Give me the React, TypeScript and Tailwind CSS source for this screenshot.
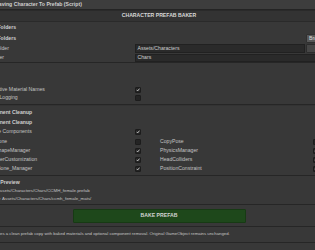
const labelFont = "font-['Liberation_Sans',Arial,sans-serif]";

function Check({ on }: { on?: boolean }) {
  return (
    <span className="w-[6px] h-[6px] rounded-[1px] bg-[#242424] border border-[#1c1c1c] flex items-center justify-center box-border">
      {on && (
        <svg viewBox="0 0 6 6" className="w-[6px] h-[6px]">
          <path d="M1.2 3.1 L2.5 4.4 L4.9 1.4" stroke="#f0f0f0" strokeWidth="1.1" fill="none" strokeLinecap="round" />
        </svg>
      )}
    </span>
  );
}

function Line() {
  return <div className="h-[1px] bg-[#262626] shrink-0" />;
}

function Header({ text, h = "h-[11px]" }: { text: string; h?: string }) {
  return (
    <div className={`${h} flex items-center font-bold text-[#cfcfcf]`}>{text}</div>
  );
}

function ToggleRow({ label, on, h = "h-[8px]" }: { label: string; on?: boolean; h?: string }) {
  return (
    <div className={`${h} flex items-center`}>
      <span className="w-[153px] shrink-0 whitespace-nowrap">{label}</span>
      <Check on={on} />
    </div>
  );
}

const cleanup = [
  ["SpineBone", false, "CopyPose", false, "h-[8px]"],
  ["BlendShapeManager", true, "PhysicsManager", true, "h-[9px]"],
  ["CharacterCustomization", true, "HeadColliders", true, "h-[9px]"],
  ["Head_Bone_Manager", true, "PositionConstraint", true, "h-[9px]"],
] as const;

export default function App() {
  return (
    <div className={`w-[315px] h-[250px] overflow-hidden bg-[#383838] text-[#c4c4c4] text-[5.15px] leading-none ${labelFont}`}>
      <div className="-ml-[18px] w-[354px] flex flex-col">
        {/* inspector title */}
        <div className="h-[10px] bg-[#3d3d3d] border-b border-[#242424] flex items-center pl-[13.4px] font-bold text-[#d0d0d0] whitespace-nowrap">
          Saving Character To Prefab (Script)
        </div>

        <div className="h-[12px] bg-[#333333] border-y border-[#2a2a2a] flex items-center justify-center font-bold text-[#d8d8d8]">
          CHARACTER PREFAB BAKER
        </div>

        {/* folders */}
        <div className="flex flex-col">
          <Header text="Asset Folders" h="h-[12px]" />
          <div className="h-[9px] flex items-center justify-between">
            <span className="font-bold text-[#cfcfcf]">Asset Folders</span>
            <span className="h-[9px] w-[30px] bg-[#585858] rounded-[1px] border border-[#303030] flex items-center pl-[2px] text-[#dcdcdc]">
              Browse
            </span>
          </div>
          <div className="h-[9px] mt-[1px] flex items-center">
            <span className="w-[153px] shrink-0 whitespace-nowrap">Root Folder</span>
            <span className="w-[170px] h-[9px] bg-[#2a2a2a] border border-[#212121] flex items-center pl-[1.5px] text-[#d0d0d0]">
              Assets/Characters
            </span>
            <span className="ml-[1px] w-[30px] h-[9px] bg-[#464646] rounded-[1px] border border-[#2c2c2c]" />
          </div>
          <div className="h-[8px] mt-[1px] flex items-center">
            <span className="w-[153px] shrink-0 whitespace-nowrap">Subfolder</span>
            <span className="flex-1 h-[8px] bg-[#2a2a2a] border border-[#212121] flex items-center pl-[1.5px] text-[#d0d0d0]">
              Chars
            </span>
          </div>
        </div>
        <Line />

        {/* options */}
        <div className="flex flex-col pt-[2px]">
          <Header text="Misc" />
          <Header text="Misc" h="h-[10px]" />
          <ToggleRow label="Descriptive Material Names" on />
          <ToggleRow label="Enable Logging" />
          <div className="h-[2px]" />
        </div>
        <Line />
        <div className="h-[1px] bg-[#333333]" />

        {/* cleanup */}
        <div className="flex flex-col pt-[1px]">
          <Header text="Component Cleanup" h="h-[11px]" />
          <Header text="Component Cleanup" h="h-[10px]" />
          <ToggleRow label="Remove Components" on />
          <div className="h-[2px]" />
          {cleanup.map(([a, aOn, b, bOn, h]) => (
            <div key={a} className={`${h} grid grid-cols-2`}>
              <div className="flex items-center">
                <span className="w-[153px] shrink-0 whitespace-nowrap">{a}</span>
                <Check on={aOn} />
              </div>
              <div className="flex items-center pl-[1px]">
                <span className="w-[153px] shrink-0 whitespace-nowrap">{b}</span>
                <Check on={bOn} />
              </div>
            </div>
          ))}
          <div className="h-[2px]" />
        </div>
        <Line />

        {/* preview */}
        <div className="flex flex-col pt-[3px] pb-[1px]">
          <div className="h-[8px] flex items-center font-bold text-[#cfcfcf]">Output Preview</div>
          <div className="h-[8px] flex items-center text-[4.4px] whitespace-nowrap">
            Prefab: Assets/Characters/Chars/CCMH_female.prefab
          </div>
          <div className="h-[8px] flex items-center text-[4.4px] whitespace-nowrap">
            Materials: Assets/Characters/Chars/ccmh_female_mats/
          </div>
        </div>
        <Line />

        {/* bake */}
        <div className="h-[21px] flex items-center justify-center">
          <button className="w-[173px] h-[14px] bg-[#1e481b] border border-[#173a14] rounded-[1px] font-bold text-[#d4d4d4] text-[5.15px]">
            BAKE PREFAB
          </button>
        </div>
        <Line />

        <div className="h-[15px] flex items-center pl-[7.5px] text-[4.3px] whitespace-nowrap">
          Creates a clean prefab copy with baked materials and optional component removal. Original GameObject remains unchanged.
        </div>
        <Line />
      </div>
    </div>
  );
}
